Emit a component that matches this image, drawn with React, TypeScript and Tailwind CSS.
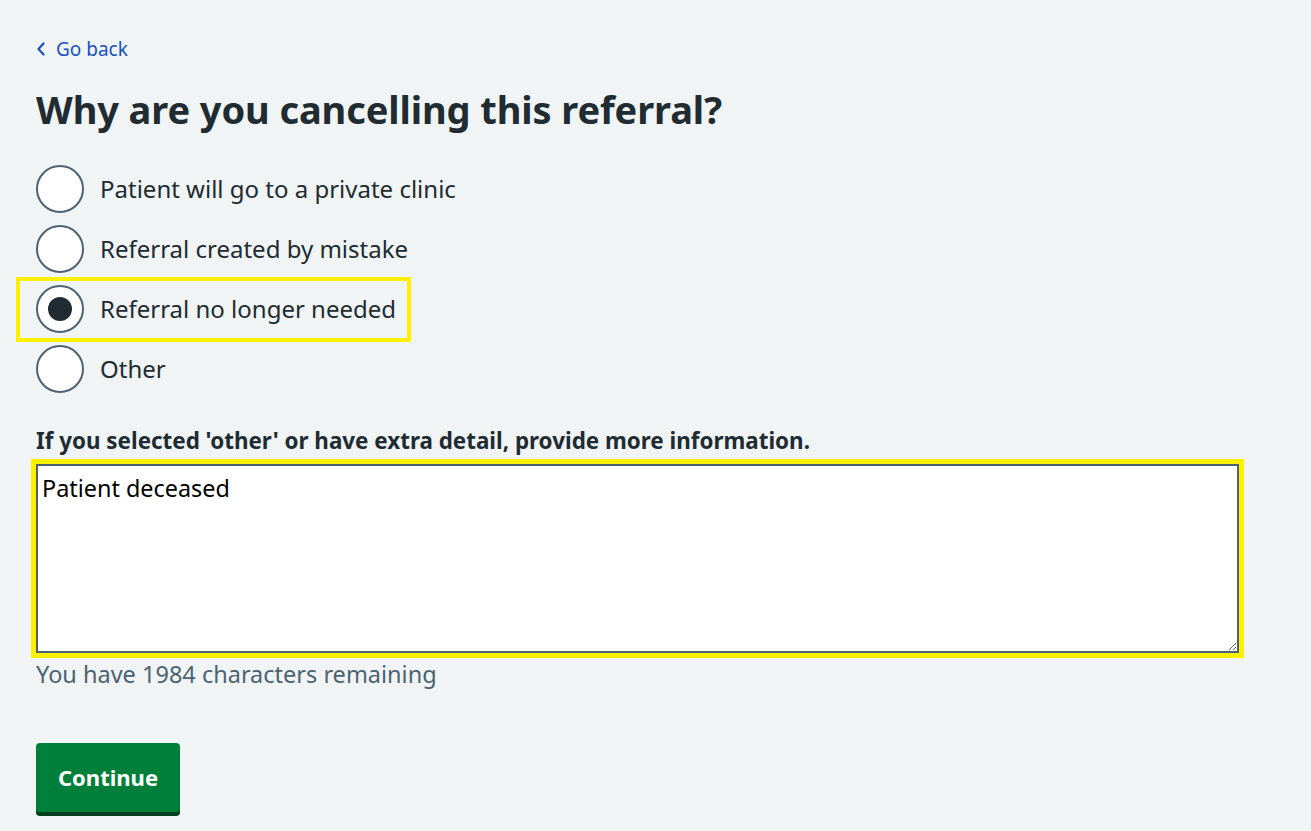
import { useState } from "react";

const options = [
  "Patient will go to a private clinic",
  "Referral created by mistake",
  "Referral no longer needed",
  "Other",
];

export default function App() {
  const [selected, setSelected] = useState(2);
  const [text, setText] = useState("Patient deceased");
  const remaining = 2000 - text.length;

  return (
    <div className="min-h-screen bg-[#f0f4f5] px-[36px] pt-[36px] pb-[14px] font-['Noto_Sans',sans-serif] text-[#212b32]">
      {/* Back link */}
      <a href="#" className="flex items-center gap-[10px] text-[19px] leading-[26px] text-[#1d4fbf] no-underline">
        <svg width="10" height="14" viewBox="0 0 10 14" className="shrink-0">
          <path d="M7.5 1.5 L2.5 7 L7.5 12.5" fill="none" stroke="currentColor" strokeWidth="2.2" strokeLinecap="round" strokeLinejoin="round" />
        </svg>
        Go back
      </a>

      <h1 className="mt-[23px] text-[38px] font-bold leading-[48px] tracking-[-0.1px]">
        Why are you cancelling this referral?
      </h1>

      {/* Radios */}
      <div className="mt-[32px] flex flex-col gap-[12px]">
        {options.map((label, i) => (
          <label key={label} className="relative flex h-[48px] cursor-pointer items-center gap-[16px]" onClick={() => setSelected(i)}>
            {selected === i && (
              <span className="pointer-events-none absolute -top-[8px] -bottom-[9px] -left-[20px] w-[395px] border-4 border-[#fff000]" />
            )}
            <span className="flex h-[48px] w-[48px] shrink-0 items-center justify-center rounded-full border-2 border-[#4c6272] bg-white">
              {selected === i && <span className="h-[24px] w-[24px] rounded-full bg-[#212b32]" />}
            </span>
            <span className="text-[24px] leading-[30px]">{label}</span>
          </label>
        ))}
      </div>

      {/* More information */}
      <div className="mt-[34px] text-[22.4px] font-bold leading-[28px]">
        If you selected 'other' or have extra detail, provide more information.
      </div>
      <textarea
        value={text}
        onChange={(e) => setText(e.target.value)}
        className="mt-[9px] block h-[189px] w-[1203px] resize-y border-2 border-[#4c6272] bg-white px-[4px] py-[7px] font-['Noto_Sans',sans-serif] text-[23.4px] leading-[30px] text-black outline-[5px] outline-offset-0 outline-[#fff000] [outline-style:solid]"
      />
      <div className="mt-[6px] text-[23.5px] leading-[30px] text-[#4c6272]">
        You have {remaining} characters remaining
      </div>

      <button
        type="button"
        className="mt-[54px] h-[69px] rounded-[4px] bg-[#007f3b] px-[22px] text-[22px] font-bold text-white shadow-[0_4px_0_#00401e]"
      >
        Continue
      </button>
    </div>
  );
}
